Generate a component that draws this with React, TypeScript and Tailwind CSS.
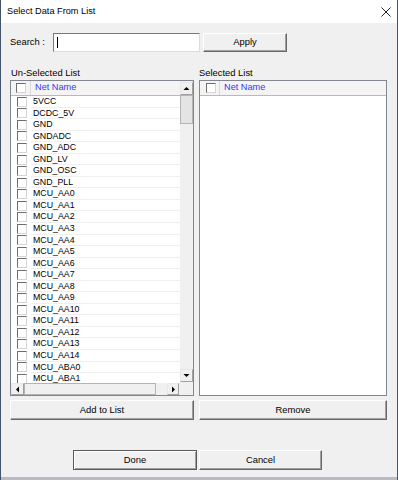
import React from 'react'

const NETS = [
  '5VCC',
  'DCDC_5V',
  'GND',
  'GNDADC',
  'GND_ADC',
  'GND_LV',
  'GND_OSC',
  'GND_PLL',
  ...Array.from({ length: 15 }, (_, i) => `MCU_AA${i}`),
  'MCU_ABA0',
  'MCU_ABA1',
]

function Check() {
  return (
    <div className="w-[10px] h-[10px] bg-white border border-t-[#6d6d6d] border-l-[#6d6d6d] border-r-[#d4d4d4] border-b-[#d4d4d4]" />
  )
}

function Arrow({ dir }: { dir: 'up' | 'down' | 'left' | 'right' }) {
  const pts = {
    up: '0.5,4 3.5,1 6.5,4',
    down: '0.5,1 3.5,4 6.5,1',
    left: '4,0.5 1,3.5 4,6.5',
    right: '1,0.5 4,3.5 1,6.5',
  }[dir]
  const vert = dir === 'up' || dir === 'down'
  return (
    <svg width={vert ? 7 : 5} height={vert ? 5 : 7} viewBox={vert ? '0 0 7 5' : '0 0 5 7'}>
      <polygon points={pts} fill="#000" />
    </svg>
  )
}

function ScrollBtn({ dir, className = '' }: { dir: 'up' | 'down' | 'left' | 'right'; className?: string }) {
  return (
    <div
      className={`bg-[#f0f0f0] border border-t-[#e8e8e8] border-l-[#e8e8e8] border-r-[#a0a0a0] border-b-[#a0a0a0] flex items-center justify-center shrink-0 ${className}`}
    >
      <Arrow dir={dir} />
    </div>
  )
}

function Header({ checkPad }: { checkPad: string }) {
  return (
    <div className="h-[15px] shrink-0 flex bg-[#f4f4f4] border-b border-[#b9b9b9]">
      <div className={`w-[20px] flex items-center border-r border-[#d9d9d9] ${checkPad}`}>
        <Check />
      </div>
      <div className="pl-[4px] flex items-center text-[9.2px] text-[#3838f0]">Net Name</div>
    </div>
  )
}

function Button({ label, className = '', isDefault }: { label: string; className?: string; isDefault?: boolean }) {
  return (
    <button
      className={`flex items-center justify-center bg-[#f0f0f0] text-[9.4px] text-black ${
        isDefault
          ? 'border border-[#5a5a5a] shadow-[inset_1px_1px_0_#ffffff,inset_-1px_-1px_0_#a0a0a0]'
          : 'border border-t-white border-l-white border-r-[#696969] border-b-[#696969] shadow-[inset_-1px_-1px_0_#a0a0a0]'
      } ${className}`}
    >
      {label}
    </button>
  )
}

export default function App() {
  return (
    <div className="w-[398px] h-[480px] flex flex-col bg-[#f0f0f0] border-x border-[#43536a] overflow-hidden font-['Liberation_Sans',Arial,sans-serif] text-black">
      <div className="h-[23px] shrink-0 bg-white flex items-center justify-between pl-[6px] pr-[6px]">
        <span className="text-[9.2px]">Select Data From List</span>
        <svg width="10" height="10" viewBox="0 0 10 10">
          <path d="M0.5 0.5 L9.5 9.5 M9.5 0.5 L0.5 9.5" stroke="#222" strokeWidth="1" />
        </svg>
      </div>

      <div className="flex-1 flex flex-col pl-[9px]">
        <div className="mt-[10px] h-[19px] flex items-center">
          <span className="w-[43px] text-[9.4px]">Search :</span>
          <div className="w-[147px] h-[19px] bg-white border border-t-[#7a7a7a] border-l-[#7a7a7a] border-r-[#dcdcdc] border-b-[#dcdcdc] flex items-center pl-[3px]">
            <div className="w-px h-[11px] bg-black" />
          </div>
          <Button label="Apply" className="ml-[3px] w-[84px] h-[19px]" />
        </div>

        <div className="mt-[14px] h-[14px] flex items-center text-[9.4px]">
          <span className="w-[189px] pl-[1px]">Un-Selected List</span>
          <span>Selected List</span>
        </div>

        <div className="h-[316px] flex gap-[5px]">
          <div className="w-[184px] border border-[#828790] bg-white grid grid-cols-[1fr_13px] grid-rows-[1fr_12px]">
            <div className="flex flex-col overflow-hidden">
              <Header checkPad="pl-[5px]" />
              {NETS.map((n) => (
                <div key={n} className="h-[11.55px] shrink-0 flex">
                  <div className="w-[20px] flex items-center pl-[6px] bg-white">
                    <Check />
                  </div>
                  <div className="flex-1 border-b border-[#efefef] pl-[2px] text-[8.8px] leading-[11px]">{n}</div>
                </div>
              ))}
            </div>
            <div className="flex flex-col bg-[#f0f0f0]">
              <ScrollBtn dir="up" className="h-[13px] mt-[1px]" />
              <div className="h-[29px] bg-[#e4e4e4] border border-[#b4b4b4]" />
              <div className="flex-1" />
              <ScrollBtn dir="down" className="h-[13px] mb-[1px]" />
            </div>
            <div className="flex bg-[#f0f0f0]">
              <ScrollBtn dir="left" className="w-[13px]" />
              <div className="w-[132px] bg-[#f0f0f0] border border-[#b4b4b4]" />
              <div className="flex-1" />
              <ScrollBtn dir="right" className="w-[12px] mr-[1px]" />
            </div>
            <div className="bg-[#f0f0f0]" />
          </div>

          <div className="w-[188px] border border-[#828790] bg-white flex flex-col">
            <Header checkPad="pl-[6px]" />
          </div>
        </div>

        <div className="mt-[4px] h-[20px] flex gap-[5px]">
          <Button label="Add to List" className="w-[184px] h-[20px]" />
          <Button label="Remove" className="w-[188px] h-[20px]" />
        </div>

        <div className="mt-[30px] h-[20px] flex gap-[2px] pl-[63px]">
          <Button label="Done" className="w-[124px] h-[20px]" isDefault />
          <Button label="Cancel" className="w-[123px] h-[20px]" />
        </div>
      </div>
      <div className="h-[3px] shrink-0 bg-[#b8bcc2]" />
    </div>
  )
}
